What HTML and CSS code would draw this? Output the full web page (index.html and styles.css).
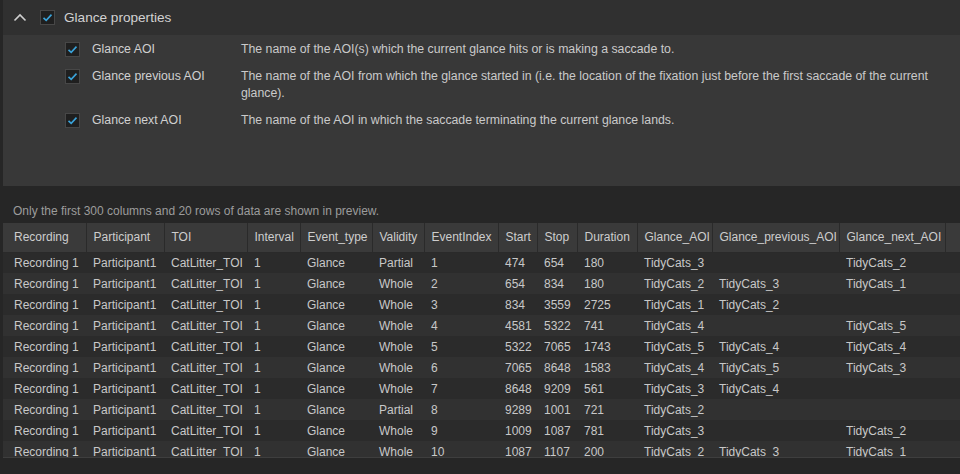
FILE: index.html
```html
<!DOCTYPE html>
<html lang="en">
<head>
    <meta charset="UTF-8">
    <title>Glance properties</title>
    <link rel="stylesheet" href="styles.css">
</head>
<body>

    <!-- Properties panel -->
    <div class="props">
        <div class="props-head">
            <svg class="chevron" width="14" height="9" viewBox="0 0 14 9"><path d="M1.5 7.5 L7 2 L12.5 7.5" fill="none" stroke="#cfcfcf" stroke-width="1.6"/></svg>
            <span class="check"><svg width="15" height="15" viewBox="0 0 15 15"><path d="M3.5 7.8 L6.2 10.4 L11.5 4.6" fill="none" stroke="#3aa3da" stroke-width="1.6"/></svg></span>
            <span class="head-title">Glance properties</span>
        </div>
        <div class="props-list">
            <div class="prop">
                <span class="check"><svg width="15" height="15" viewBox="0 0 15 15"><path d="M3.5 7.8 L6.2 10.4 L11.5 4.6" fill="none" stroke="#3aa3da" stroke-width="1.6"/></svg></span>
                <span class="prop-name">Glance AOI</span>
                <span class="prop-desc">The name of the AOI(s) which the current glance hits or is making a saccade to.</span>
            </div>
            <div class="prop">
                <span class="check"><svg width="15" height="15" viewBox="0 0 15 15"><path d="M3.5 7.8 L6.2 10.4 L11.5 4.6" fill="none" stroke="#3aa3da" stroke-width="1.6"/></svg></span>
                <span class="prop-name">Glance previous AOI</span>
                <span class="prop-desc">The name of the AOI from which the glance started in (i.e. the location of the fixation just before the first saccade of the current glance).</span>
            </div>
            <div class="prop">
                <span class="check"><svg width="15" height="15" viewBox="0 0 15 15"><path d="M3.5 7.8 L6.2 10.4 L11.5 4.6" fill="none" stroke="#3aa3da" stroke-width="1.6"/></svg></span>
                <span class="prop-name">Glance next AOI</span>
                <span class="prop-desc">The name of the AOI in which the saccade terminating the current glance lands.</span>
            </div>
        </div>
    </div>

    <!-- Data preview -->
    <div class="preview">
        <p class="note">Only the first 300 columns and 20 rows of data are shown in preview.</p>
        <div class="grid-wrap">
            <table class="grid">
                <colgroup>
                    <col style="width:83px"><col style="width:78px"><col style="width:83px"><col style="width:53px">
                    <col style="width:72px"><col style="width:52px"><col style="width:74px"><col style="width:39px">
                    <col style="width:40px"><col style="width:60px"><col style="width:75px"><col style="width:127px">
                    <col style="width:106px"><col>
                </colgroup>
                <thead>
                    <tr>
                        <th>Recording</th><th>Participant</th><th>TOI</th><th>Interval</th><th>Event_type</th><th>Validity</th><th>EventIndex</th><th>Start</th><th>Stop</th><th>Duration</th><th>Glance_AOI</th><th>Glance_previous_AOI</th><th>Glance_next_AOI</th><th class="filler"></th>
                    </tr>
                </thead>
                <tbody>
                    <tr><td>Recording 1</td><td>Participant1</td><td>CatLitter_TOI</td><td>1</td><td>Glance</td><td>Partial</td><td>1</td><td>474</td><td>654</td><td>180</td><td>TidyCats_3</td><td></td><td>TidyCats_2</td><td></td></tr>
                    <tr><td>Recording 1</td><td>Participant1</td><td>CatLitter_TOI</td><td>1</td><td>Glance</td><td>Whole</td><td>2</td><td>654</td><td>834</td><td>180</td><td>TidyCats_2</td><td>TidyCats_3</td><td>TidyCats_1</td><td></td></tr>
                    <tr><td>Recording 1</td><td>Participant1</td><td>CatLitter_TOI</td><td>1</td><td>Glance</td><td>Whole</td><td>3</td><td>834</td><td>3559</td><td>2725</td><td>TidyCats_1</td><td>TidyCats_2</td><td></td><td></td></tr>
                    <tr><td>Recording 1</td><td>Participant1</td><td>CatLitter_TOI</td><td>1</td><td>Glance</td><td>Whole</td><td>4</td><td>4581</td><td>5322</td><td>741</td><td>TidyCats_4</td><td></td><td>TidyCats_5</td><td></td></tr>
                    <tr><td>Recording 1</td><td>Participant1</td><td>CatLitter_TOI</td><td>1</td><td>Glance</td><td>Whole</td><td>5</td><td>5322</td><td>7065</td><td>1743</td><td>TidyCats_5</td><td>TidyCats_4</td><td>TidyCats_4</td><td></td></tr>
                    <tr><td>Recording 1</td><td>Participant1</td><td>CatLitter_TOI</td><td>1</td><td>Glance</td><td>Whole</td><td>6</td><td>7065</td><td>8648</td><td>1583</td><td>TidyCats_4</td><td>TidyCats_5</td><td>TidyCats_3</td><td></td></tr>
                    <tr><td>Recording 1</td><td>Participant1</td><td>CatLitter_TOI</td><td>1</td><td>Glance</td><td>Whole</td><td>7</td><td>8648</td><td>9209</td><td>561</td><td>TidyCats_3</td><td>TidyCats_4</td><td></td><td></td></tr>
                    <tr><td>Recording 1</td><td>Participant1</td><td>CatLitter_TOI</td><td>1</td><td>Glance</td><td>Partial</td><td>8</td><td>9289</td><td>1001</td><td>721</td><td>TidyCats_2</td><td></td><td></td><td></td></tr>
                    <tr><td>Recording 1</td><td>Participant1</td><td>CatLitter_TOI</td><td>1</td><td>Glance</td><td>Whole</td><td>9</td><td>1009</td><td>1087</td><td>781</td><td>TidyCats_3</td><td></td><td>TidyCats_2</td><td></td></tr>
                    <tr><td>Recording 1</td><td>Participant1</td><td>CatLitter_TOI</td><td>1</td><td>Glance</td><td>Whole</td><td>10</td><td>1087</td><td>1107</td><td>200</td><td>TidyCats_2</td><td>TidyCats_3</td><td>TidyCats_1</td><td></td></tr>
                </tbody>
            </table>
        </div>
    </div>

</body>
</html>
```

FILE: styles.css
```css
/* Reset */
* {
    margin: 0;
    padding: 0;
    box-sizing: border-box;
}

body {
    font-family: "Liberation Sans", Arial, sans-serif;
    font-size: 12px;
    color: #cfcfcf;
    background-color: #262626;
    height: 474px;
    overflow: hidden;
    display: flex;
    flex-direction: column;
}

/* Properties panel */
.props {
    margin-left: 3px;
    height: 186px;
    background-color: #383838;
}

.props-head {
    height: 35px;
    background-color: #303030;
    display: flex;
    align-items: center;
    padding-left: 10px;
}

.chevron {
    margin-right: 13px;
    margin-top: -1px;
}

.check {
    width: 15px;
    height: 15px;
    flex-shrink: 0;
    background-color: #1f1f1f;
    border: 1px solid #474747;
    display: flex;
    align-items: center;
    justify-content: center;
}

.check svg {
    margin: -1px;
}

.head-title {
    font-size: 13.6px;
    color: #d2d2d2;
    margin-left: 9px;
}

.props-list {
    display: flex;
    flex-direction: column;
    gap: 10px;
    padding: 6px 12px 0 62px;
    font-size: 12.3px;
}

.prop {
    display: flex;
    align-items: flex-start;
    line-height: 17px;
}

.prop .check {
    margin-top: 1px;
}

.prop-name {
    width: 161px;
    flex-shrink: 0;
    padding-left: 12px;
    color: #d0d0d0;
}

.prop-desc {
    flex: 1;
    color: #cacaca;
}

/* Data preview */
.preview {
    flex: 1;
    display: flex;
    flex-direction: column;
}

.note {
    color: #9c9c9c;
    line-height: 16px;
    padding: 17px 0 0 13px;
    margin-bottom: 4px;
}

.grid-wrap {
    margin-left: 3px;
    height: 235px;
    overflow: hidden;
    border-bottom: 1px solid #3e3e3e;
}

.grid {
    width: 100%;
    table-layout: fixed;
    border-collapse: collapse;
    white-space: nowrap;
}

.grid th {
    height: 29px;
    font-weight: normal;
    text-align: left;
    color: #cdcdcd;
    background-color: #3a3a3a;
    border-right: 1px solid #2a2a2a;
    border-bottom: 1px solid #2a2a2a;
    padding-left: 7px;
    overflow: hidden;
}

.grid th.filler {
    border-right: none;
}

.grid td {
    height: 21px;
    padding-left: 7px;
    color: #c8c8c8;
    overflow: hidden;
}

.grid th:first-child,
.grid td:first-child {
    padding-left: 11px;
}

.grid tbody tr:nth-child(odd) {
    background-color: #2b2b2b;
}

.grid tbody tr:nth-child(even) {
    background-color: #313131;
}
```
